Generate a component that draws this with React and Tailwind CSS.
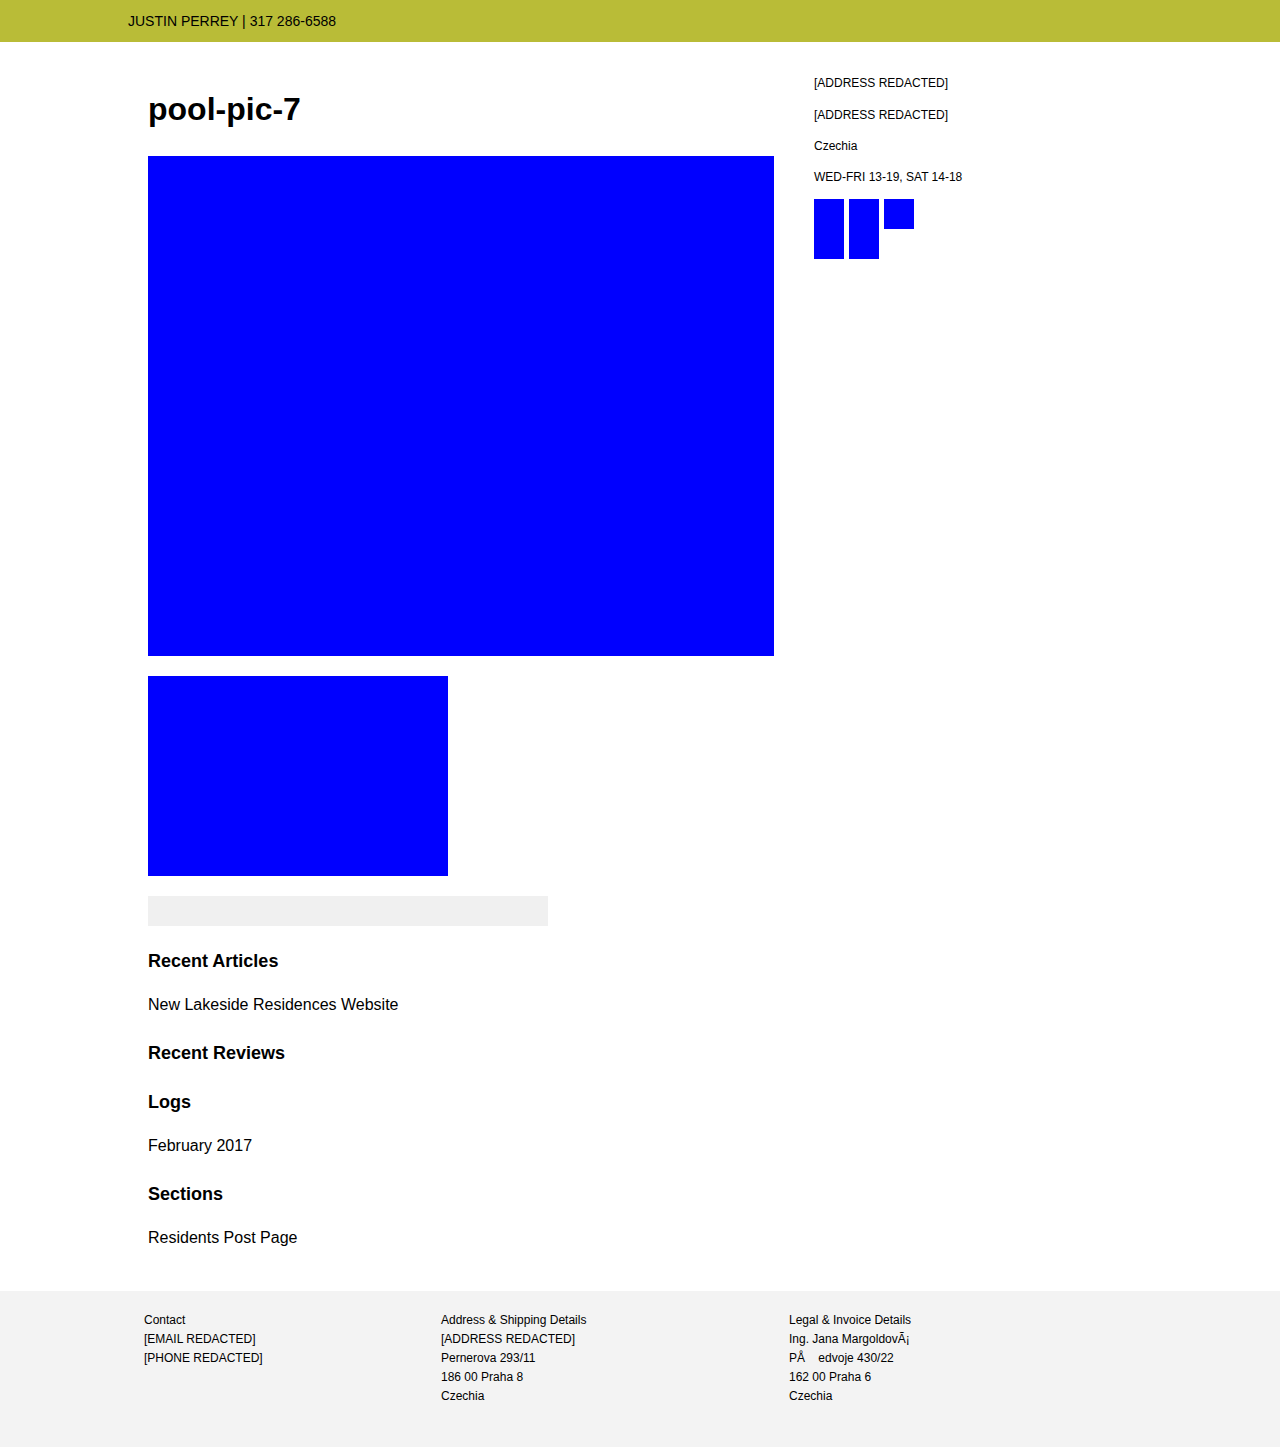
export default function App() {
  const sections = [
    { title: "Recent Articles", link: "New Lakeside Residences Website" },
    { title: "Recent Reviews", link: null },
    { title: "Logs", link: "February 2017" },
    { title: "Sections", link: "Residents Post Page" },
  ];

  return (
    <div className="min-h-[1447px] bg-white text-black font-['Liberation_Sans',Arial,sans-serif]">

      {/* top bar */}
      <div className="h-[42px] bg-[#b9bc37] flex items-center">
        <div className="pl-[128px] text-[14px] leading-none">JUSTIN PERREY | 317 286-6588</div>
      </div>

      {/* main */}
      <div className="flex pl-[148px] pb-[43px]">

        {/* content column */}
        <div className="w-[626px] pt-[49px]">
          <h1 className="text-[32px] leading-[37px] font-bold mb-[28px]">pool-pic-7</h1>

          <div className="w-[626px] h-[500px] bg-[#0000ff] mb-[20px]" />
          <div className="w-[300px] h-[200px] bg-[#0000ff] mb-[20px]" />
          <div className="w-[400px] h-[30px] bg-[#f0f0f0] mb-[24px]" />

          {sections.map((s, i) => (
            <div key={s.title} className={i === 0 ? "" : "mt-[27px]"}>
              <h3 className="text-[18px] leading-[22px] font-bold">{s.title}</h3>
              {s.link && (
                <p className="text-[16px] leading-[20px] mt-[23px]">{s.link}</p>
              )}
            </div>
          ))}
        </div>

        {/* sidebar */}
        <div className="ml-[40px] pt-[34px] text-[12px] leading-[14px]">
          <p className="mb-[18px]">[ADDRESS REDACTED]</p>
          <p className="mb-[17px]">[ADDRESS REDACTED]</p>
          <p className="mb-[17px]">Czechia</p>
          <p className="mb-[15px]">WED-FRI 13-19, SAT 14-18</p>
          <div className="flex items-start gap-[5px]">
            <div className="w-[30px] h-[60px] bg-[#0000ff]" />
            <div className="w-[30px] h-[60px] bg-[#0000ff]" />
            <div className="w-[30px] h-[30px] bg-[#0000ff]" />
          </div>
        </div>
      </div>

      {/* footer */}
      <div className="bg-[#f3f3f3] h-[156px] pt-[20px] pl-[144px] flex text-[12px] leading-[19px]">
        <div className="w-[297px]">
          <p>Contact</p>
          <p>[EMAIL REDACTED]</p>
          <p>[PHONE REDACTED]</p>
        </div>
        <div className="w-[348px]">
          <p>Address &amp; Shipping Details</p>
          <p>[ADDRESS REDACTED]</p>
          <p>Pernerova 293/11</p>
          <p>186 00 Praha 8</p>
          <p>Czechia</p>
        </div>
        <div>
          <p>Legal &amp; Invoice Details</p>
          <p>Ing. Jana MargoldovÃ¡</p>
          <p>PÅ{"\u00a0\u00a0\u00a0\u00a0"}edvoje 430/22</p>
          <p>162 00 Praha 6</p>
          <p>Czechia</p>
        </div>
      </div>
    </div>
  );
}
